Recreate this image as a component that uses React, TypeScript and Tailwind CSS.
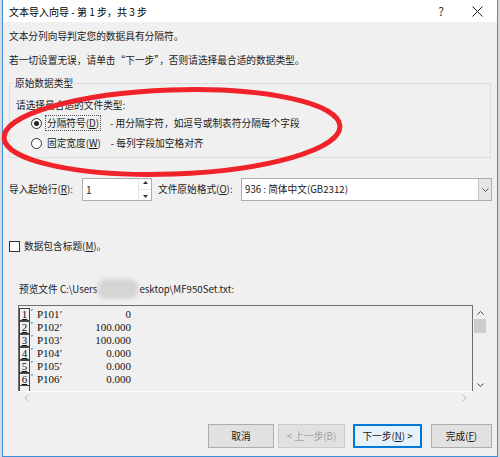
import React from 'react';

const ui = { fontFamily: '"Noto Sans CJK SC", "Microsoft YaHei", sans-serif' };
const mono = { fontFamily: '"Liberation Serif", "Noto Sans CJK SC", serif' };

const rows = [
  { n: '1', name: 'P101', val: '0' },
  { n: '2', name: 'P102', val: '100.000' },
  { n: '3', name: 'P103', val: '100.000' },
  { n: '4', name: 'P104', val: '0.000' },
  { n: '5', name: 'P105', val: '0.000' },
  { n: '6', name: 'P106', val: '0.000' },
];

function Radio({ checked }: { checked?: boolean }) {
  return (
    <span className="w-[11px] h-[11px] shrink-0 rounded-full border border-[#333] bg-white flex items-center justify-center">
      {checked && <span className="w-[5px] h-[5px] rounded-full bg-[#222]" />}
    </span>
  );
}

export default function App() {
  return (
    <div className="w-[500px] h-[457px] bg-[#d9d9d9] relative overflow-hidden text-[9.7px] text-[#1a1a1a] whitespace-nowrap" style={ui}>
      <div className="absolute left-[2px] top-0 w-[496px] h-[457px] border-l border-r border-b border-[#3c8fd6] bg-[#f0f0f0] flex flex-col">
        {/* title bar */}
        <div className="h-[22px] bg-white flex items-center pl-[6px] pr-[12px] shrink-0">
          <span className="text-[10px] text-black">文本导入向导 - 第 1 步，共 3 步</span>
          <span className="ml-auto text-[12px] text-[#333] mr-[28px]">?</span>
          <svg width="11" height="11" viewBox="0 0 11 11" className="mr-[2px]">
            <path d="M0.5 0.5 L10.5 10.5 M10.5 0.5 L0.5 10.5" stroke="#222" strokeWidth="1" />
          </svg>
        </div>

        <div className="pl-[6px] pr-[5px] flex flex-col">
          <div className="mt-[5px] h-[18px] flex items-center">文本分列向导判定您的数据具有分隔符。</div>
          <div className="mt-[6px] h-[18px] flex items-center">若一切设置无误，请单击“下一步”，否则请选择最合适的数据类型。</div>

          {/* group box */}
          <div className="relative mt-[14px] h-[75px] border border-[#dcdcdc] mr-[1px]">
            <span className="absolute -top-[10px] left-[4px] px-[1px] bg-[#f0f0f0] leading-[18px]">原始数据类型</span>
            <div className="pl-[6px] pt-[12px] leading-[18px]">请选择最合适的文件类型:</div>
            <div className="flex items-center pl-[21px] h-[18px]">
              <Radio checked />
              <span className="ml-[3px] px-[1px] border border-dotted border-[#555] leading-[14px]">
                分隔符号(<u>D</u>)
              </span>
              <span className="ml-[9px]">- 用分隔字符，如逗号或制表符分隔每个字段</span>
            </div>
            <div className="flex items-center pl-[21px] mt-[2px] h-[18px]">
              <Radio />
              <span className="ml-[4px] px-[1px]">固定宽度(<u>W</u>)</span>
              <span className="ml-[9px]">- 每列字段加空格对齐</span>
            </div>
          </div>

          {/* start row / encoding */}
          <div className="mt-[20px] flex items-center h-[23px]">
            <span className="w-[73px]">导入起始行(<u>R</u>):</span>
            <div className="w-[70px] h-[23px] bg-white border border-[#adadad] flex items-center">
              <span className="pl-[3px] flex-1 text-[10px]">1</span>
              <div className="w-[13px] h-full border-l border-[#e5e5e5] flex flex-col items-center justify-around text-[#333]">
                <svg width="5" height="3" viewBox="0 0 5 3"><path d="M0 3 L2.5 0 L5 3 Z" fill="#333" /></svg>
                <div className="w-full border-t border-[#e5e5e5]" />
                <svg width="5" height="3" viewBox="0 0 5 3"><path d="M0 0 L2.5 3 L5 0 Z" fill="#333" /></svg>
              </div>
            </div>
            <span className="ml-[6px] w-[83px]">文件原始格式(<u>O</u>):</span>
            <div className="flex-1 h-[23px] bg-white border border-[#adadad] flex items-center">
              <span className="pl-[3px] flex-1">936 : 简体中文(GB2312)</span>
              <div className="w-[13px] h-full bg-[#e6e6e6] border-l border-[#c5c5c5] flex items-center justify-center">
                <svg width="7" height="4" viewBox="0 0 7 4"><path d="M0.5 0.5 L3.5 3.5 L6.5 0.5" stroke="#555" fill="none" /></svg>
              </div>
            </div>
          </div>

          {/* checkbox */}
          <div className="mt-[38px] flex items-center h-[14px]">
            <span className="w-[11px] h-[11px] border border-[#333] bg-white" />
            <span className="ml-[4px]">数据包含标题(<u>M</u>)。</span>
          </div>

          {/* preview label */}
          <div className="mt-[28px] pl-[10px] flex items-center h-[16px] text-[#222]">
            <span>预览文件 C:\Users</span>
            <span className="w-[42px] h-[16px] flex items-center justify-center">
              <span className="w-[40px] h-[20px] rounded-[8px] bg-[#d4d4d4] blur-[2px]" />
            </span>
            <span>esktop\MF950Set.txt:</span>
          </div>

          {/* preview box */}
          <div className="mt-[8px] ml-[9px] w-[469px] flex">
            <div className="w-[455px] flex flex-col">
              <div className="h-[86px] border-t border-l border-r border-[#6e6e6e] overflow-hidden pt-[2px]" style={mono}>
                {rows.map((r) => (
                  <div key={r.n} className="flex items-center h-[13px] text-[11px] text-[#111]">
                    <span className="w-[11px] h-[13px] border border-[#444] border-t-0 first:border-t flex items-end justify-center leading-[12px] underline">
                      {r.n}
                    </span>
                    <span className="w-[5px] text-[9px] self-start leading-[8px] pl-[1px]">′</span>
                    <span className="w-[40px] pl-[2px]">{r.name}′</span>
                    <span className="w-[56px] text-right">{r.val}</span>
                  </div>
                ))}
                <span className="block w-[11px] h-[8px] border-l border-r border-[#444]" />
              </div>
              <div className="h-[12px] border-t border-white flex items-center justify-between px-[6px] text-[#b5b5b5]">
                <svg width="5" height="8" viewBox="0 0 5 8"><path d="M4.5 0.5 L1 4 L4.5 7.5" stroke="#b5b5b5" fill="none" /></svg>
                <svg width="5" height="8" viewBox="0 0 5 8"><path d="M0.5 0.5 L4 4 L0.5 7.5" stroke="#b5b5b5" fill="none" /></svg>
              </div>
            </div>
            <div className="w-[14px] h-[86px] flex flex-col items-center pt-[6px] pb-[4px]">
              <svg width="7" height="4" viewBox="0 0 7 4"><path d="M0.5 3.5 L3.5 0.5 L6.5 3.5" stroke="#444" fill="none" /></svg>
              <div className="mt-[4px] w-[12px] h-[14px] bg-[#cdcdcd]" />
              <div className="flex-1" />
              <svg width="7" height="4" viewBox="0 0 7 4"><path d="M0.5 0.5 L3.5 3.5 L6.5 0.5" stroke="#444" fill="none" /></svg>
            </div>
          </div>

          {/* buttons */}
          <div className="mt-[21px] flex items-center h-[24px]">
            <div className="ml-[199px] w-[66px] h-[24px] border border-[#adadad] bg-[#e1e1e1] flex items-center justify-center">取消</div>
            <div className="ml-[4px] w-[67px] h-[24px] border border-[#cccccc] bg-[#e1e1e1] flex items-center justify-center text-[#a0a0a0]">&lt; 上一步(B)</div>
            <div className="ml-[8px] w-[69px] h-[24px] border-2 border-[#0078d7] bg-[#e5f1fb] flex items-center justify-center">下一步(<u>N</u>) &gt;</div>
            <div className="ml-[9px] w-[61px] h-[24px] border border-[#adadad] bg-[#e1e1e1] flex items-center justify-center">完成(<u>F</u>)</div>
          </div>
        </div>
      </div>

      {/* red ellipse annotation */}
      <svg className="absolute left-0 top-0 pointer-events-none" width="500" height="457" viewBox="0 0 500 457">
        <ellipse cx="172" cy="132" rx="168" ry="42" fill="none" stroke="#f0222a" strokeWidth="5" transform="rotate(-2 172 132)" />
      </svg>
    </div>
  );
}
